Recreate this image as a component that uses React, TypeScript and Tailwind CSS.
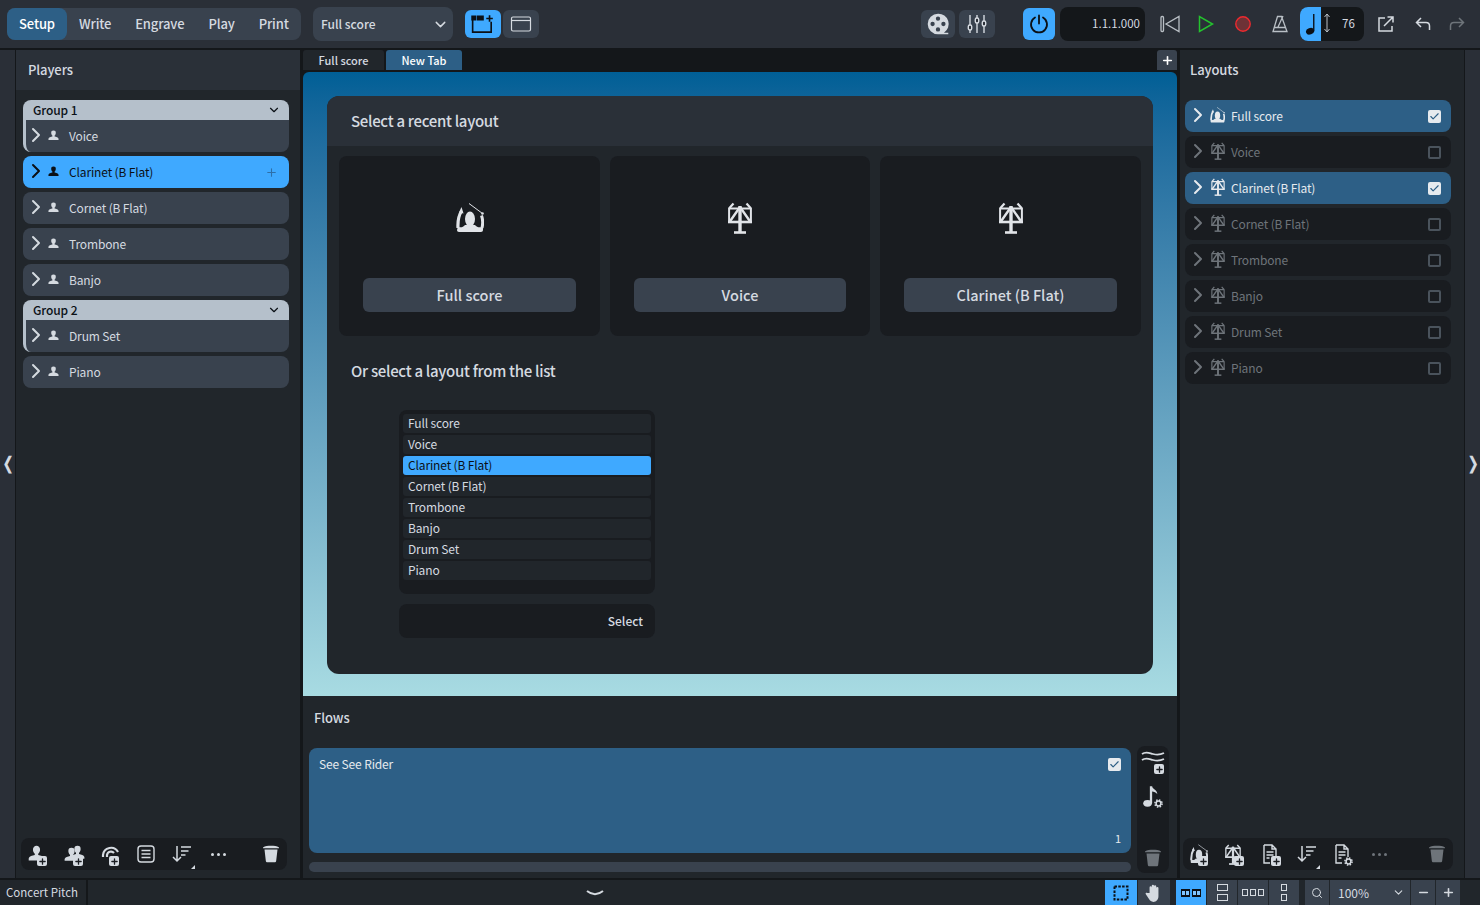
import { Check, ChevronDown, ChevronRight, Minus, Plus, Search } from "lucide-react"
import type { ReactNode } from "react"

const players1 = ["Cornet (B Flat)", "Trombone", "Banjo"]
const layouts = [
  { name: "Full score", on: true, icon: "conductor" },
  { name: "Voice", on: false, icon: "stand" },
  { name: "Clarinet (B Flat)", on: true, icon: "stand" },
  { name: "Cornet (B Flat)", on: false, icon: "stand" },
  { name: "Trombone", on: false, icon: "stand" },
  { name: "Banjo", on: false, icon: "stand" },
  { name: "Drum Set", on: false, icon: "stand" },
  { name: "Piano", on: false, icon: "stand" },
]
const listItems = ["Full score", "Voice", "Clarinet (B Flat)", "Cornet (B Flat)", "Trombone", "Banjo", "Drum Set", "Piano"]

const rowText = "text-[12px] tracking-[-0.14px]"
const heading = "text-[15px] font-medium tracking-[-0.3px]"
const panelTitle = "text-[13px] font-medium tracking-[-0.1px]"

function PersonIcon({ className = "" }: { className?: string }) {
  return (
    <svg viewBox="0 0 12 12" className={className} fill="currentColor">
      <path d="M6 .6a2.500 2.500 0 0 1 2.500 2.700c0 1.200-.6 2.300-1.300 2.800v1c1.700.4 3.900.8 4.300 2.500v1.300H.5v-1.300c.4-1.700 2.600-2.100 4.300-2.500v-1C4.100 5.600 3.500 4.500 3.500 3.300A2.500 2.500 0 0 1 6 .6z" />
    </svg>
  )
}

function ConductorIcon({ className = "" }: { className?: string }) {
  return (
    <svg viewBox="0 0 28 30" className={className} fill="currentColor">
      <path d="M13 .5l13.500 10" stroke="currentColor" strokeWidth="1" fill="none" />
      <circle cx="26.500" cy="10.500" r="1.300" />
      <path d="M5.500 4l2 6.500-4.500-1z" />
      <path d="M5.500 8C3 12 1.600 18 2 25" stroke="currentColor" strokeWidth="3.200" fill="none" />
      <path d="M25.500 12.500c1.500 4 1.500 8 .5 12.500" stroke="currentColor" strokeWidth="3" fill="none" />
      <ellipse cx="14" cy="16" rx="5" ry="7.500" />
      <path d="M2 23.500c2 1.500 5 1 7-1.500h10c2 2.500 5 3 8 1.500V27c0 1.300-.8 2-2 2H3c-1.200 0-2-.7-2-2z" />
    </svg>
  )
}

function StandIcon({ className = "" }: { className?: string }) {
  return (
    <svg viewBox="0 0 24 32" className={className} fill="none" stroke="currentColor" strokeWidth="2.200">
      <path d="M1 6.500L5.500 1.500M23 6.500l-4.500-5" />
      <path d="M1.100 6v14.500M22.900 6v14.500M1 6.500h22" strokeWidth="2" />
      <path d="M0 20h24" strokeWidth="2.600" />
      <path d="M12 5L1.500 20M12 5l10.500 15" strokeWidth="2.400" />
      <path d="M12 4v26" strokeWidth="3.400" />
      <path d="M6 30.500h12" strokeWidth="2.600" />
    </svg>
  )
}

function PlusBadge({ pos = "-bottom-[2px] right-[1px]" }: { pos?: string }) {
  return (
    <span className={`absolute flex h-[10px] w-[10px] items-center justify-center rounded-[2px] bg-[#d5dae0] text-[#191c20] ${pos}`}>
      <Plus size={9} strokeWidth={3.5} />
    </span>
  )
}

function GearBadge({ className = "" }: { className?: string }) {
  return (
    <svg viewBox="0 0 12 12" className={className} fill="none" stroke="#d5dae0">
      <circle cx="6" cy="6" r="3.200" strokeWidth="2" />
      <circle cx="6" cy="6" r="4.800" strokeWidth="2" strokeDasharray="2 1.770" />
    </svg>
  )
}

function ToolIcon({ children, badge, dim }: { children: ReactNode; badge?: boolean; dim?: boolean }) {
  return (
    <span className={`relative flex h-[20px] w-[20px] shrink-0 items-center justify-center ${dim ? "text-[#6e747a]" : "text-[#d5dae0]"}`}>
      {children}
      {badge && <PlusBadge />}
    </span>
  )
}

function TrashIcon({ className = "" }: { className?: string }) {
  return (
    <svg viewBox="0 0 18 18" className={className} fill="currentColor">
      <path d="M1 2.500C3 1 6 .8 9 .8s6 .2 8 1.700v.8H1z" />
      <path d="M2.500 4.500h13l-1.300 11.200c-.1 1-.8 1.500-1.700 1.500H5.500c-.9 0-1.600-.5-1.700-1.500z" />
    </svg>
  )
}

function SortTool() {
  return (
    <ToolIcon>
      <svg viewBox="0 0 20 20" className="h-[20px] w-[20px]" fill="none" stroke="currentColor" strokeWidth="1.500">
        <path d="M5 2v15M1 13l4 4 4-4M9 3h10M9 7h7.500M9 11h4.500" />
      </svg>
      <span className="absolute -bottom-[5px] right-[-3px] h-0 w-0 border-b-[4px] border-l-[4px] border-b-[#d5dae0] border-l-transparent" />
    </ToolIcon>
  )
}

function DotsTool({ dim }: { dim?: boolean }) {
  return (
    <ToolIcon dim={dim}>
      <span className="flex gap-[3px]">
        <span className="h-[3px] w-[3px] rounded-full bg-current" />
        <span className="h-[3px] w-[3px] rounded-full bg-current" />
        <span className="h-[3px] w-[3px] rounded-full bg-current" />
      </span>
    </ToolIcon>
  )
}

function DocIcon({ gear }: { gear?: boolean }) {
  return (
    <span className="relative flex h-[20px] w-[20px] shrink-0 items-center justify-center text-[#d5dae0]">
      <svg viewBox="0 0 16 20" className="-ml-[2px] h-[20px] w-[16px]" fill="none" stroke="currentColor" strokeWidth="1.400">
        <path d="M2 1h8l4 4v8M8 19H2V1M10 1v4h4M4.500 8h7M4.500 11h7M4.500 14h3" />
      </svg>
      {gear ? <GearBadge className="absolute -bottom-[2px] right-0 h-[9px] w-[9px]" /> : <PlusBadge pos="-bottom-[2px] right-0" />}
    </span>
  )
}

function PlayerRow({ name, active, grouped }: { name: string; active?: boolean; grouped?: boolean }) {
  return (
    <div
      className={`flex h-[32px] items-center pr-[11px] ${grouped ? "rounded-b-lg border-l-[3px] border-[#b5c0cb]" : "rounded-lg pl-[3px]"} ${
        active ? "bg-[#3fa9ff] text-[#0b1016]" : "bg-[#39424e] text-[#d5dae0]"
      }`}
    >
      <ChevronRight size={24} strokeWidth={2} className="-ml-[2px] -mt-[3px] shrink-0" />
      <PersonIcon className="-mt-[1px] h-[11px] w-[11px]" />
      <span className={`ml-[10px] flex-1 ${rowText}`}>{name}</span>
      {active && <Plus size={13} className="text-[#2d6fa8]" />}
    </div>
  )
}

function GroupHeader({ name }: { name: string }) {
  return (
    <div className="flex h-[20px] items-center justify-between rounded-t-lg bg-[#b5c0cb] pl-[10px] pr-[8px] text-[#0b1016]">
      <span className="text-[12px] font-medium tracking-[-0.1px]">{name}</span>
      <ChevronDown size={14} />
    </div>
  )
}

function LayoutRow({ name, on, icon }: { name: string; on: boolean; icon: string }) {
  return (
    <div className={`flex h-[32px] items-center rounded-lg pl-[1px] pr-[10px] ${on ? "bg-[#2d5f86] text-[#e6eaee]" : "bg-[#191c20] text-[#6e747a]"}`}>
      <ChevronRight size={24} strokeWidth={2} className="-mt-[3px] shrink-0" />
      <span className="-mt-[3px] flex w-[15px] justify-center">
        {icon === "conductor" ? <ConductorIcon className="h-[16px] w-[15px]" /> : <StandIcon className="h-[18px] w-[14px]" />}
      </span>
      <span className={`ml-[6px] flex-1 ${rowText}`}>{name}</span>
      {on ? (
        <span className="flex h-[13px] w-[13px] items-center justify-center rounded-[2px] bg-[#e6eaee] text-[#2d5f86]">
          <Check size={11} strokeWidth={2.5} />
        </span>
      ) : (
        <span className="h-[13px] w-[13px] rounded-[2px] border-2 border-[#4a535c]" />
      )}
    </div>
  )
}

function RecentCard({ label, icon }: { label: string; icon: ReactNode }) {
  return (
    <div className="flex h-[180px] flex-col items-center rounded-lg bg-[#191c20] px-[24px] pt-[46px]">
      <div className="flex h-[32px] items-center justify-center text-[#e1e4e8]">{icon}</div>
      <div className="mt-[44px] flex h-[34px] w-full items-center justify-center rounded-md bg-[#39424e] text-[14.500px] font-medium text-[#d5dae0]">
        {label}
      </div>
    </div>
  )
}

function StatusButton({ children, active, w }: { children: ReactNode; active?: boolean; w: string }) {
  return (
    <div className={`flex h-full items-center justify-center ${w} ${active ? "bg-[#3fa9ff] text-[#0b1016]" : "bg-[#39424e] text-[#d5dae0]"}`}>
      {children}
    </div>
  )
}

function FrameBoxes({ n, vertical }: { n: number; vertical?: boolean }) {
  return (
    <span className={`flex ${vertical ? "flex-col gap-[3px]" : "gap-[2px]"}`}>
      {Array.from({ length: n }).map((_, i) => (
        <span key={i} className="h-[7px] w-[6px] border border-current" />
      ))}
    </span>
  )
}

function TwoUpIcon() {
  return (
    <svg viewBox="0 0 20 8" className="h-[8px] w-[20px]">
      <rect width="9" height="8" fill="#0b1016" />
      <rect x="11" width="9" height="8" fill="#0b1016" />
      <path d="M1 2h3v4H1zM5 2h3v4H5zM12 2h3v4h-3zM16 2h3v4h-3z" fill="#7fc4ff" />
    </svg>
  )
}

export default function App() {
  return (
    <div className="flex h-[905px] w-[1480px] flex-col overflow-hidden bg-[#14171a] text-[#d5dae0]" style={{ fontFamily: '"Noto Sans CJK SC", "Noto Sans", sans-serif' }}>
      {/* top bar */}
      <header className="flex h-[48px] shrink-0 items-center bg-[#2a2f37] pl-[7px]">
        <nav className="flex h-[32px] w-[294px] items-center rounded-lg bg-[#39424e] text-[13px] font-medium tracking-[-0.15px]">
          <span className="flex h-full w-[60px] items-center justify-center rounded-lg bg-[#2d5f86] text-white">Setup</span>
          <span className="ml-[12px]">Write</span>
          <span className="ml-[24px]">Engrave</span>
          <span className="ml-[24px]">Play</span>
          <span className="ml-[24px]">Print</span>
        </nav>
        <div className="ml-[12px] flex h-[34px] w-[140px] items-center justify-between rounded-lg bg-[#39424e] pl-[8px] pr-[4px] text-[12px] font-medium">
          Full score
          <ChevronDown size={17} />
        </div>
        <div className="ml-[12px] flex h-[28px] w-[36px] items-center justify-center rounded-md bg-[#3fa9ff] text-[#0b1016]">
          <svg viewBox="0 0 22 18" className="h-[20px] w-[24px]" fill="none" stroke="currentColor" strokeWidth="1.500">
            <path d="M1.500 5v11.500h17V7" />
            <path d="M1 2h3v3H1zM6 2h5v3H6z" fill="currentColor" />
            <path d="M14 4h6M17 1v6" />
          </svg>
        </div>
        <div className="ml-[2px] flex h-[28px] w-[36px] items-center justify-center rounded-md bg-[#39424e]">
          <svg viewBox="0 0 22 18" className="h-[18px] w-[22px]" fill="none" stroke="currentColor" strokeWidth="1.200">
            <rect x="1.500" y="2" width="19" height="14" rx="1.500" />
            <path d="M1.500 5.500h19" />
          </svg>
        </div>
        <div className="ml-[382px] flex h-[28px] w-[34px] items-center justify-center rounded-md bg-[#39424e]">
          <svg viewBox="0 0 24 24" className="h-[26px] w-[26px]" fill="currentColor">
            <path fillRule="evenodd" d="M12 2.500a9.500 9.500 0 1 0 0 19h9.500V20h-4a9.500 9.500 0 0 0-5.500-17.500zM12 5a2 2 0 1 1 0 4 2 2 0 0 1 0-4zm-5 5a2 2 0 1 1 0 4 2 2 0 0 1 0-4zm10 0a2 2 0 1 1 0 4 2 2 0 0 1 0-4zm-5 5a2 2 0 1 1 0 4 2 2 0 0 1 0-4z" />
          </svg>
        </div>
        <div className="ml-[4px] flex h-[28px] w-[36px] items-center justify-center rounded-md bg-[#39424e]">
          <svg viewBox="0 0 22 22" className="h-[22px] w-[22px]" fill="none" stroke="currentColor" strokeWidth="1.400">
            <path d="M4 2v18M11 2v18M18 2v18" />
            <rect x="2.300" y="12" width="3.400" height="5" rx="1.500" fill="#2a2f37" />
            <rect x="9.300" y="5" width="3.400" height="5" rx="1.500" fill="#2a2f37" />
            <rect x="16.300" y="8" width="3.400" height="5" rx="1.500" fill="#2a2f37" />
          </svg>
        </div>
        <div className="ml-[28px] flex h-[32px] w-[32px] items-center justify-center rounded-md bg-[#3fa9ff] text-[#0b1016]">
          <svg viewBox="0 0 20 20" className="h-[20px] w-[20px]" fill="none" stroke="currentColor" strokeWidth="1.800" strokeLinecap="round">
            <path d="M10 1.500v8M6 3.500a8 8 0 1 0 8 0" />
          </svg>
        </div>
        <div className="ml-[5px] flex h-[34px] w-[85px] items-center justify-end rounded-lg bg-[#14171a] pr-[5px] text-[11.500px]">1.1.1.000</div>
        <div className="ml-[15px] flex w-[20px] justify-center text-[#b9bfc5]">
          <svg viewBox="0 0 20 18" className="h-[18px] w-[20px]" fill="none" stroke="currentColor" strokeWidth="1.300">
            <rect x="1" y="1.500" width="2.500" height="15" rx="1" />
            <path d="M19 1.500v15L6 9z" />
          </svg>
        </div>
        <svg viewBox="0 0 16 18" className="ml-[18px] h-[18px] w-[16px]" fill="none" stroke="#24c22e" strokeWidth="1.500">
          <path d="M1.500 1.500v15L14.500 9z" />
        </svg>
        <svg viewBox="0 0 16 16" className="ml-[21px] h-[16px] w-[16px]">
          <circle cx="8" cy="8" r="7.200" fill="#6e3236" stroke="#ee2a2f" strokeWidth="1.400" />
        </svg>
        <svg viewBox="0 0 16 18" className="ml-[21px] h-[18px] w-[16px] text-[#b9bfc5]" fill="none" stroke="currentColor" strokeWidth="1.300">
          <path d="M5.500 1.500h4L15 16.500H1zM2.500 12.500h11M6 12L11 1" />
        </svg>
        <div className="ml-[12px] flex h-[34px] w-[64px] overflow-hidden rounded-lg bg-[#14171a]">
          <span className="flex w-[21px] items-end justify-center bg-[#3fa9ff] pb-[6px] text-[#0b1016]">
            <svg viewBox="0 0 12 24" className="h-[22px] w-[11px]" fill="currentColor">
              <ellipse cx="5.500" cy="20" rx="4.500" ry="3.500" transform="rotate(-20 5.500 20)" />
              <path d="M8.800 1h1.500v19H8.800z" />
            </svg>
          </span>
          <svg viewBox="0 0 8 20" className="ml-[2px] mt-[6px] h-[20px] w-[8px] text-[#b9bfc5]" fill="none" stroke="currentColor" strokeWidth="1">
            <path d="M4 1v18M1.500 4L4 1l2.500 3M1.500 16L4 19l2.500-3" />
          </svg>
          <span className="ml-[11px] flex items-center text-[11.500px]">76</span>
        </div>
        <svg viewBox="0 0 18 18" className="ml-[13px] h-[18px] w-[18px] text-[#d5dae0]" fill="none" stroke="currentColor" strokeWidth="1.500">
          <path d="M8 3H2v13h13v-5M7 11l9-9M10.500 2H16v5.500" />
        </svg>
        <svg viewBox="0 0 16 14" className="ml-[20px] h-[14px] w-[16px] text-[#d5dae0]" fill="none" stroke="currentColor" strokeWidth="1.500">
          <path d="M6 1L1.500 5.500 6 10M1.500 5.500H11c2 0 3.500 1.500 3.500 3.500v4" />
        </svg>
        <svg viewBox="0 0 16 14" className="ml-[18px] h-[14px] w-[16px] text-[#6e747a]" fill="none" stroke="currentColor" strokeWidth="1.500">
          <path d="M10 1l4.500 4.500L10 10M14.500 5.500H5C3 5.500 1.500 7 1.500 9v4" />
        </svg>
      </header>

      {/* work area */}
      <div className="mt-[2px] flex h-[828px] shrink-0">
        <div className="flex w-[15px] items-center justify-center bg-[#2a2f37] pb-[4px] text-[17px] font-bold text-[#d5dae0]">❬</div>

        <aside className="ml-[1px] flex w-[284px] flex-col bg-[#21262b]">
          <div className={`flex h-[40px] items-center bg-[#2a3038] pl-[12px] ${panelTitle}`}>Players</div>
          <div className="flex flex-col pl-[7px] pr-[11px] pt-[10px]">
            <GroupHeader name="Group 1" />
            <PlayerRow name="Voice" grouped />
            <div className="mt-[4px] flex flex-col gap-[4px]">
              <PlayerRow name="Clarinet (B Flat)" active />
              {players1.map((name) => (
                <PlayerRow key={name} name={name} />
              ))}
            </div>
            <div className="mt-[4px]">
              <GroupHeader name="Group 2" />
            </div>
            <PlayerRow name="Drum Set" grouped />
            <div className="mt-[4px]">
              <PlayerRow name="Piano" />
            </div>
          </div>
          <div className="mb-[8px] ml-[5px] mr-[13px] mt-auto flex h-[32px] items-center gap-[16px] rounded-lg bg-[#191c20] pl-[7px] pr-[7px]">
            <ToolIcon badge>
              <PersonIcon className="-ml-[3px] -mt-[2px] h-[17px] w-[17px]" />
            </ToolIcon>
            <ToolIcon badge>
              <span className="relative block h-[18px] w-[20px]">
                <PersonIcon className="absolute left-[6px] top-0 h-[15px] w-[15px]" />
                <PersonIcon className="absolute left-0 top-[2px] h-[15px] w-[15px]" />
              </span>
            </ToolIcon>
            <ToolIcon badge>
              <svg viewBox="0 0 20 20" className="-mt-[3px] h-[20px] w-[20px]" fill="none" stroke="currentColor" strokeWidth="2.200">
                <path d="M3 14V12a8 8 0 0 1 15-3M7 14v-2a4 4 0 0 1 7-2" />
              </svg>
            </ToolIcon>
            <ToolIcon>
              <svg viewBox="0 0 18 18" className="h-[18px] w-[18px]" fill="none" stroke="currentColor" strokeWidth="1.400">
                <rect x="1" y="1" width="16" height="16" rx="3" />
                <path d="M4.500 5.500h9M4.500 9h9M4.500 12.500h9" />
              </svg>
            </ToolIcon>
            <SortTool />
            <DotsTool />
            <span className="ml-auto text-[#d5dae0]">
              <TrashIcon className="h-[18px] w-[18px]" />
            </span>
          </div>
        </aside>

        <main className="ml-[3px] flex w-[874px] flex-col">
          {/* tabs */}
          <div className="flex h-[20px] items-center gap-[2px] text-[11px] font-medium">
            <span className="flex h-full w-[81px] items-center justify-center rounded-t-[3px] bg-[#21262b] text-[#d5dae0]">Full score</span>
            <span className="flex h-full w-[76px] items-center justify-center rounded-t-[3px] bg-[#2d5f86] text-white">New Tab</span>
            <span className="ml-auto flex h-full w-[20px] items-center justify-center rounded-t-[3px] bg-[#39424e] text-white">
              <Plus size={13} strokeWidth={3} />
            </span>
          </div>
          <div className="mt-[2px] h-[624px] rounded-t-md bg-gradient-to-b from-[#005f96] to-[#a8dbe2] p-[24px]">
            <div className="flex h-[578px] flex-col rounded-xl bg-[#21262b]">
              <div className={`flex h-[50px] shrink-0 items-center rounded-t-xl bg-[#2a3038] pl-[24px] ${heading}`}>Select a recent layout</div>
              <div className="grid grid-cols-[261px_260px_261px] gap-[10px] px-[12px] pt-[10px]">
                <RecentCard label="Full score" icon={<ConductorIcon className="h-[30px] w-[28px]" />} />
                <RecentCard label="Voice" icon={<StandIcon className="h-[32px] w-[24px]" />} />
                <RecentCard label="Clarinet (B Flat)" icon={<StandIcon className="h-[32px] w-[24px]" />} />
              </div>
              <div className={`mt-[24px] pl-[24px] ${heading}`}>Or select a layout from the list</div>
              <div className="ml-[72px] mt-[27px] w-[256px]">
                <div className="flex h-[184px] flex-col gap-[2px] rounded-lg bg-[#191c20] px-[4px] pt-[4px]">
                  {listItems.map((item) => (
                    <div
                      key={item}
                      className={`flex h-[19px] items-center rounded-[3px] pl-[5px] ${rowText} ${item === "Clarinet (B Flat)" ? "bg-[#3fa9ff] text-[#0b1016]" : "bg-[#21262b] text-[#d5dae0]"}`}
                    >
                      {item}
                    </div>
                  ))}
                </div>
                <div className="mt-[10px] flex h-[34px] items-center justify-end rounded-lg bg-[#191c20] pr-[12px] text-[12px] font-medium">Select</div>
              </div>
            </div>
          </div>

          {/* flows */}
          <div className="flex flex-1 flex-col bg-[#21262b]">
            <div className={`pl-[11px] pt-[12px] leading-[20px] ${panelTitle}`}>Flows</div>
            <div className="mt-[18px] flex pl-[6px]">
              <div className="w-[822px]">
                <div className="relative mt-[2px] h-[105px] rounded-lg bg-[#2d5f86] text-[#e6eaee]">
                  <span className={`absolute left-[10px] top-[7px] ${rowText}`}>See See Rider</span>
                  <span className="absolute right-[10px] top-[10px] flex h-[13px] w-[13px] items-center justify-center rounded-[2px] bg-[#e6eaee] text-[#2d5f86]">
                    <Check size={11} strokeWidth={2.5} />
                  </span>
                  <span className="absolute bottom-[7px] right-[10px] text-[11px]">1</span>
                </div>
                <div className="mt-[9px] h-[10px] rounded-full bg-[#39424e]" />
              </div>
              <div className="ml-[6px] flex h-[127px] w-[32px] flex-col items-center rounded-lg bg-[#191c20] pb-[6px] pt-[4px]">
                <span className="relative flex h-[24px] w-[24px] text-[#d5dae0]">
                  <svg viewBox="0 0 24 16" className="h-[16px] w-[24px]" fill="none" stroke="currentColor" strokeWidth="1.800">
                    <path d="M1 4c4-3 7-1 11 0s7 1 11-1M1 10c4-3 7-1 11 0s7 1 11-1" />
                  </svg>
                  <PlusBadge pos="bottom-0 right-[1px]" />
                </span>
                <span className="relative mt-[11px] block h-[24px] w-[20px] text-[#d5dae0]">
                  <svg viewBox="0 0 14 20" className="h-[23px] w-[16px]" fill="currentColor">
                    <ellipse cx="4" cy="16" rx="3.800" ry="3" />
                    <path d="M6 1h2c.5 3 4.500 3 4.500 7-1-1.500-3-2-4.500-2.300V16H6z" />
                  </svg>
                  <GearBadge className="absolute bottom-[1px] right-0 h-[9px] w-[9px]" />
                </span>
                <span className="mt-auto text-[#6e747a]">
                  <TrashIcon className="h-[18px] w-[18px]" />
                </span>
              </div>
            </div>
          </div>
        </main>

        <aside className="ml-[3px] flex w-[284px] flex-col bg-[#21262b]">
          <div className={`flex h-[40px] items-center pl-[10px] ${panelTitle}`}>Layouts</div>
          <div className="flex flex-col gap-[4px] pl-[5px] pr-[13px] pt-[10px]">
            {layouts.map((item) => (
              <LayoutRow key={item.name} name={item.name} on={item.on} icon={item.icon} />
            ))}
          </div>
          <div className="mb-[8px] ml-[3px] mr-[11px] mt-auto flex h-[32px] items-center gap-[16px] rounded-lg bg-[#191c20] pl-[6px] pr-[7px]">
            <ToolIcon badge>
              <ConductorIcon className="-ml-[1px] h-[20px] w-[18px]" />
            </ToolIcon>
            <ToolIcon badge>
              <StandIcon className="-ml-[4px] h-[21px] w-[16px]" />
            </ToolIcon>
            <DocIcon />
            <SortTool />
            <DocIcon gear />
            <DotsTool dim />
            <span className="ml-auto text-[#6e747a]">
              <TrashIcon className="h-[18px] w-[18px]" />
            </span>
          </div>
        </aside>

        <div className="ml-[1px] flex flex-1 items-center justify-center bg-[#2a2f37] pb-[4px] text-[17px] font-bold text-[#d5dae0]">❭</div>
      </div>

      {/* status bar */}
      <footer className="mt-[2px] flex h-[25px] shrink-0 items-center bg-[#21262b]">
        <span className="flex h-full w-[88px] items-center border-r-2 border-[#14171a] pl-[6px] text-[11.500px]">Concert Pitch</span>
        <svg viewBox="0 0 18 6" className="ml-[498px] h-[6px] w-[18px] text-[#d5dae0]" fill="none" stroke="currentColor" strokeWidth="2">
          <path d="M1 1c5 4 11 4 16 0" />
        </svg>
        <div className="ml-[501px] flex h-full items-center gap-[1px]">
          <StatusButton active w="w-[32px]">
            <svg viewBox="0 0 16 16" className="h-[16px] w-[16px]" fill="none" stroke="currentColor" strokeWidth="2">
              <rect x="1.500" y="1.500" width="13" height="13" strokeDasharray="2.500 1.300" />
            </svg>
          </StatusButton>
          <StatusButton w="w-[32px]">
            <svg viewBox="0 0 18 18" className="h-[20px] w-[20px]" fill="currentColor">
              <path d="M5 9V4a1 1 0 0 1 2 0V2.500a1 1 0 0 1 2 0V3a1 1 0 0 1 2 0v1.500a1 1 0 0 1 2 0V12c0 3-2 5-4.500 5-2 0-3-1-4-2.500L1.500 10c-.5-1 .8-1.800 1.500-1z" />
            </svg>
          </StatusButton>
        </div>
        <div className="ml-[6px] flex h-full items-center gap-[1px]">
          <StatusButton active w="w-[30px]">
            <TwoUpIcon />
          </StatusButton>
          <StatusButton w="w-[30px]">
            <span className="grid grid-cols-1 gap-[3px]">
              <span className="h-[7px] w-[11px] border border-current" />
              <span className="h-[7px] w-[11px] border border-current" />
            </span>
          </StatusButton>
          <StatusButton w="w-[30px]">
            <FrameBoxes n={3} />
          </StatusButton>
          <StatusButton w="w-[30px]">
            <FrameBoxes n={2} vertical />
          </StatusButton>
        </div>
        <div className="ml-[6px] flex h-full items-center gap-[1px]">
          <StatusButton w="w-[24px]">
            <Search size={12} strokeWidth={2} />
          </StatusButton>
          <StatusButton w="w-[80px]">
            <span className="flex w-full items-center justify-between pl-[8px] pr-[5px] text-[12px]">
              100%
              <ChevronDown size={13} />
            </span>
          </StatusButton>
          <StatusButton w="w-[24px]">
            <Minus size={13} strokeWidth={3} />
          </StatusButton>
          <StatusButton w="w-[24px]">
            <Plus size={13} strokeWidth={3} />
          </StatusButton>
        </div>
      </footer>
    </div>
  )
}
